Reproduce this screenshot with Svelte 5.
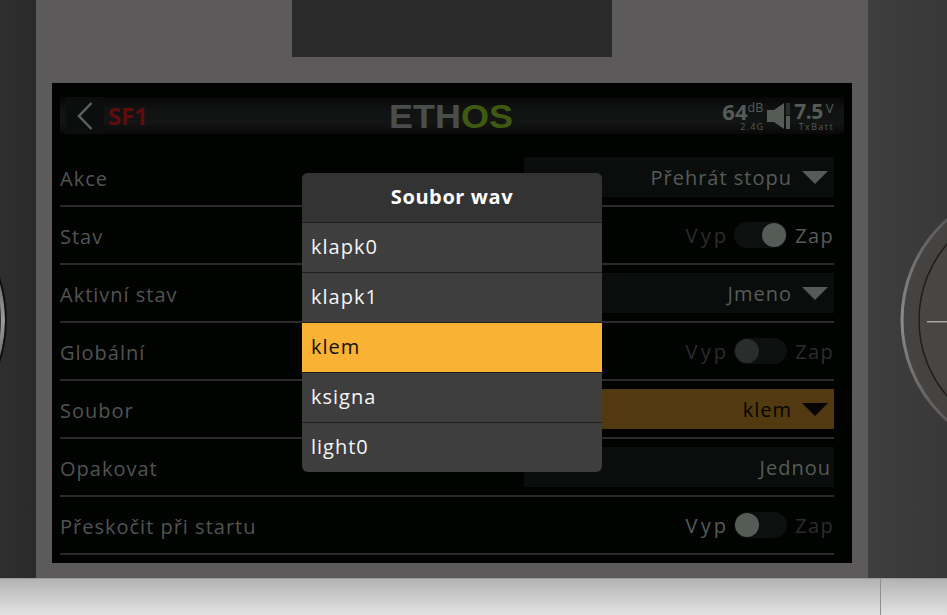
<script lang="ts">
  const rows = [
    { label: 'Akce', kind: 'select', value: 'Přehrát stopu' },
    { label: 'Stav', kind: 'toggle', on: true },
    { label: 'Aktivní stav', kind: 'select', value: 'Jmeno' },
    { label: 'Globální', kind: 'toggle', on: false, disabled: true },
    { label: 'Soubor', kind: 'select', value: 'klem', active: true },
    { label: 'Opakovat', kind: 'plain', value: 'Jednou' },
    { label: 'Přeskočit při startu', kind: 'toggle', on: false }
  ];
  const files = ['klapk0', 'klapk1', 'klem', 'ksigna', 'light0'];
  const selected = 'klem';
</script>

<div class="stage">
  <div class="body">
    <div class="frame">
      <div class="screen">
        <header class="topbar">
          <div class="back">
            <svg width="18" height="28" viewBox="0 0 18 28"><path d="M15.500 1 L3 14 L15.500 27" fill="none" stroke="#5e615f" stroke-width="2.500" /></svg>
          </div>
          <span class="sf">SF1</span>
          <span class="logo">ETH<em>OS</em></span>
          <div class="status">
            <div class="stat">
              <div class="big">64<sup>dB</sup></div>
              <div class="tiny">2.4G</div>
            </div>
            <svg class="spk" width="23" height="26" viewBox="0 0 23 26">
              <path d="M0 7 H7 L17 0 V26 L7 19 H0 Z" fill="#555c58" />
              <rect x="19" y="0" width="4" height="12" fill="#2b2e2c" />
              <rect x="19" y="13" width="4" height="13" fill="#555c58" />
            </svg>
            <div class="stat">
              <div class="big volt">7.5<sup>V</sup></div>
              <div class="tiny wide">TxBatt</div>
            </div>
          </div>
        </header>

        <div class="rows">
          {#each rows as row}
            <div class="row">
              <span class="label">{row.label}</span>
              {#if row.kind === 'toggle'}
                <div class="toggle">
                  <span class="off" class:dim={row.on || row.disabled}>Vyp</span>
                  <span class="track" class:on={row.on} class:disabled={row.disabled}><i></i></span>
                  <span class="zap" class:dim={!row.on}>Zap</span>
                </div>
              {:else}
                <div class="value" class:active={row.active} class:plain={row.kind === 'plain'}>
                  <span>{row.value}</span>
                  {#if row.kind === 'select'}<b class="caret"></b>{/if}
                </div>
              {/if}
            </div>
          {/each}
        </div>
      </div>
    </div>
  </div>
  <div class="footer"><span class="rule"></span></div>

  <div class="notch"></div>

  <svg class="knob left" width="8" height="120" viewBox="0 0 8 120">
    <defs>
      <linearGradient id="rimL" x1="0" y1="0" x2="0" y2="1">
        <stop offset="0.15" stop-color="#333" />
        <stop offset="0.5" stop-color="#9a9a9a" />
        <stop offset="0.85" stop-color="#333" />
      </linearGradient>
    </defs>
    <circle cx="-130" cy="60" r="133" fill="none" stroke="url(#rimL)" stroke-width="4" />
    <circle cx="-130" cy="60" r="136" fill="none" stroke="#111" stroke-width="2" />
  </svg>
  <svg class="knob right" width="47" height="220" viewBox="0 0 47 220">
    <defs>
      <linearGradient id="rimR" x1="0" y1="0" x2="0" y2="1">
        <stop offset="0" stop-color="#4a4646" />
        <stop offset="0.5" stop-color="#8c8c8c" />
        <stop offset="1" stop-color="#4e4646" />
      </linearGradient>
    </defs>
    <circle cx="136" cy="110" r="134" fill="#454242" stroke="url(#rimR)" stroke-width="3" />
    <circle cx="136" cy="110" r="117" fill="#4a4545" stroke="#241a1a" stroke-width="1.500" />
    <rect x="27" y="111" width="20" height="1.500" fill="#a5a5a5" />
  </svg>

  <div class="dialog">
    <div class="title">Soubor wav</div>
    {#each files as file}
      <div class="item" class:sel={file === selected}>{file}</div>
    {/each}
  </div>
</div>

<style>
  :global(body) {
    margin: 0;
    background: #2b2b2b;
  }

  .stage {
    position: relative;
    width: 947px;
    height: 615px;
    overflow: hidden;
    font-family: "Open Sans", "Noto Sans", sans-serif;
    display: flex;
    flex-direction: column;
  }

  .body {
    height: 578px;
    padding-left: 36px;
    background: linear-gradient(90deg, #302f2f 0, #2a2a2a 36px, #3e3e3e 868px, #383838 947px);
  }

  .frame {
    width: 832px;
    height: 578px;
    box-sizing: border-box;
    padding: 83px 16px 0;
    background: #5c5a5b;
  }

  .screen {
    width: 800px;
    height: 480px;
    box-sizing: border-box;
    padding: 14px 8px 0;
    background: #010301;
  }

  .footer {
    flex: 1;
    position: relative;
    border-top: 1px solid #9c9c9c;
    background: linear-gradient(#b3b3b3, #e2e2e2);
  }

  .rule {
    position: absolute;
    left: 880px;
    top: 0;
    bottom: 0;
    width: 1px;
    background: #8f8f8f;
  }

  .notch {
    position: absolute;
    left: 292px;
    top: 0;
    width: 320px;
    height: 57px;
    background: #2b2a2a;
  }

  .knob {
    position: absolute;
  }

  .knob.left {
    left: 0;
    top: 260px;
  }

  .knob.right {
    left: 900px;
    top: 210px;
  }

  .topbar {
    height: 37px;
    display: flex;
    align-items: center;
    background: linear-gradient(#060706 0, #101211 30%, #131514 70%, #070807 100%);
    position: relative;
  }

  .back {
    width: 38px;
    height: 37px;
    margin-left: 6px;
    background: #0b0e0c;
    display: flex;
    align-items: center;
    justify-content: center;
  }

  .sf {
    margin-left: 4px;
    font-size: 24px;
    font-weight: 700;
    color: #5e0c0c;
    letter-spacing: -0.2px;
  }

  .logo {
    position: absolute;
    left: 329px;
    top: 0;
    line-height: 39px;
    font-size: 33px;
    font-weight: 700;
    font-family: "Liberation Sans", sans-serif;
    color: #4b4d4c;
    transform: scaleX(1.09);
    transform-origin: left center;
  }

  .logo em {
    font-style: normal;
    color: #3f5a10;
  }

  .status {
    margin-left: auto;
    margin-right: 11px;
    display: flex;
    align-items: center;
    gap: 4px;
    color: #555c58;
  }

  .stat {
    margin-top: 3px;
    text-align: right;
  }

  .big {
    font-size: 22px;
    font-weight: 700;
    line-height: 18px;
    display: flex;
    align-items: flex-start;
    justify-content: flex-end;
  }

  .big sup {
    font-size: 12.500px;
    font-weight: 400;
    line-height: 12px;
  }

  .big.volt {
    font-size: 21px;
    letter-spacing: -0.5px;
  }

  .big.volt sup {
    margin-left: 3px;
    font-size: 13px;
  }

  .tiny {
    margin-top: 2px;
    margin-right: -1px;
    font-size: 9px;
    line-height: 10px;
    letter-spacing: 1.200px;
  }

  .tiny.wide {
    letter-spacing: 1.400px;
  }

  .rows {
    margin-top: 15px;
    width: 774px;
  }

  .row {
    height: 58px;
    box-sizing: border-box;
    padding-top: 8px;
    border-bottom: 2px solid #2a2a2a;
    display: flex;
    justify-content: space-between;
    letter-spacing: 1px;
    font-size: 20px;
  }

  .label {
    line-height: 44px;
    height: 40px;
    color: #505452;
  }

  .value {
    width: 310px;
    height: 40px;
    box-sizing: border-box;
    padding: 0 5px 0 0;
    background: #0a0d0b;
    color: #555c58;
    display: flex;
    align-items: center;
    justify-content: flex-end;
    gap: 10px;
  }

  .value.plain {
    padding-right: 3px;
  }

  .value.active {
    background: #53390f;
    color: #050505;
  }

  .caret {
    width: 0;
    height: 0;
    margin-right: 1px;
    border-left: 13px solid transparent;
    border-right: 13px solid transparent;
    border-top: 13px solid #555c58;
  }

  .value.active .caret {
    border-top-color: #050505;
  }

  .toggle {
    height: 40px;
    display: flex;
    align-items: center;
    gap: 8px;
    color: #555c58;
  }

  .off {
    letter-spacing: 3.200px;
    margin-right: -3px;
  }

  .zap {
    letter-spacing: 1.300px;
  }

  .dim {
    color: #2b2d2c;
  }

  .track {
    width: 53px;
    height: 26px;
    border-radius: 13px;
    background: #0c100e;
    display: flex;
    align-items: center;
  }

  .track i {
    width: 24px;
    height: 24px;
    border-radius: 50%;
    background: #555c58;
    margin-left: 1px;
  }

  .track.on {
    justify-content: flex-end;
  }

  .track.on i {
    margin: 0 1px 0 0;
  }

  .track.disabled i {
    background: #2b2d2c;
  }

  .dialog {
    position: absolute;
    left: 302px;
    top: 173px;
    width: 300px;
    height: 299px;
    border-radius: 6px;
    overflow: hidden;
    background: #3e3e3e;
    letter-spacing: 1px;
    font-size: 20px;
  }

  .title {
    height: 49px;
    line-height: 47px;
    background: #333;
    color: #fff;
    font-weight: 700;
    letter-spacing: 0.6px;
    text-align: center;
  }

  .item {
    height: 50px;
    box-sizing: border-box;
    border-top: 1px solid #1f1f1f;
    padding-left: 9px;
    line-height: 47px;
    color: #f6f6f6;
  }

  .item.sel {
    background: #f9b233;
    color: #111;
  }
</style>
